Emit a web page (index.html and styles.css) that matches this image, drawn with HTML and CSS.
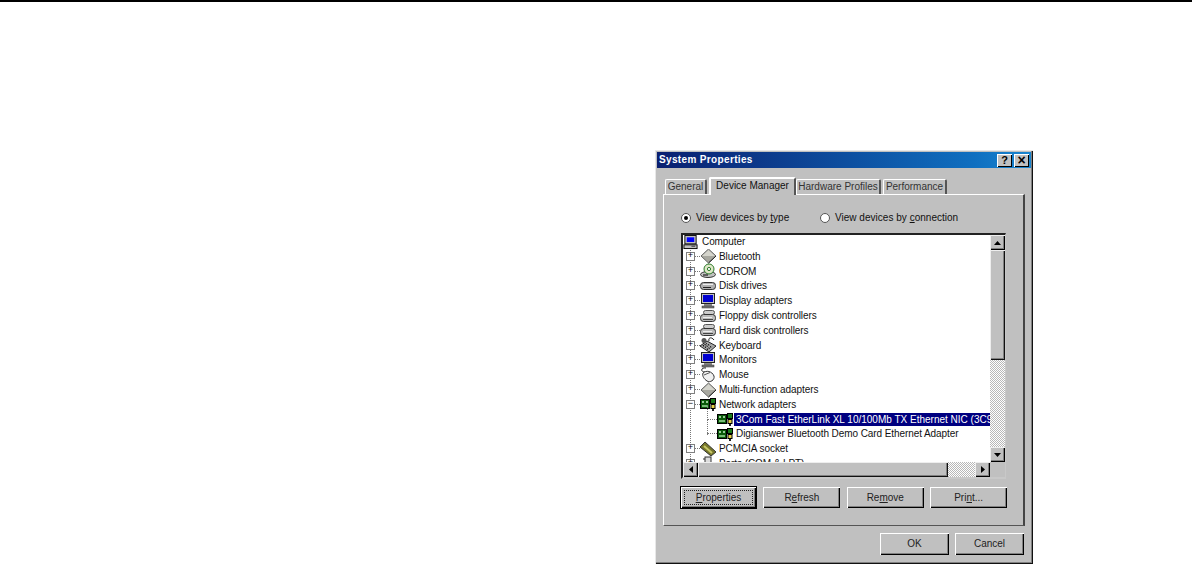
FILE: index.html
```html
<!DOCTYPE html>
<html lang="en">
<head>
<meta charset="utf-8">
<title>System Properties</title>
<link rel="stylesheet" href="styles.css">
</head>
<body>
<svg class="defs" width="0" height="0" aria-hidden="true">
  <symbol id="i-computer" viewBox="0 0 16 16"><rect x="2" y="1" width="12" height="9" fill="#c0c0c0" stroke="#000"/><rect x="4" y="3" width="8" height="5" fill="#00f"/><rect x="1" y="11" width="14" height="4" fill="#c0c0c0" stroke="#000"/><rect x="9" y="12" width="4" height="1" fill="#333"/></symbol>
  <symbol id="i-diamond" viewBox="0 0 16 16"><path d="M8.5 1 16 8 8.5 15 1 8Z" fill="#a8a8a0" stroke="#666"/><path d="M8.5 2 15 8H2Z" fill="#d4d4cc"/><path d="M8.5 15 16 8" stroke="#222" fill="none"/></symbol>
  <symbol id="i-cd" viewBox="0 0 16 16"><ellipse cx="8" cy="11.5" rx="7.5" ry="3" fill="#c0c0c0" stroke="#333"/><circle cx="9" cy="6" r="5" fill="#dfe8c8" stroke="#2c7a2c"/><circle cx="9" cy="6" r="1.6" fill="#fff" stroke="#2c7a2c"/><path d="M3 12h5" stroke="#000"/></symbol>
  <symbol id="i-disk" viewBox="0 0 16 16"><rect x="0.5" y="4.5" width="15" height="7" rx="3" fill="#b0b0b0" stroke="#333"/><path d="M3 6.5h10" stroke="#eee"/><path d="M3 9.5h8" stroke="#222"/></symbol>
  <symbol id="i-monitor" viewBox="0 0 16 16"><rect x="1.5" y="0.5" width="13" height="10" fill="#c0c0c0" stroke="#222"/><rect x="3" y="2" width="10" height="7" fill="#0000d0"/><rect x="4" y="11" width="8" height="2" fill="#888"/><rect x="2" y="13" width="12" height="2" fill="#777" stroke="#333" stroke-width=".5"/></symbol>
  <symbol id="i-floppy" viewBox="0 0 16 16"><rect x="3.5" y="2.5" width="11" height="4" rx="2" fill="#ccc" stroke="#555"/><rect x="0.5" y="6.5" width="15" height="7" rx="3" fill="#bbb" stroke="#333"/><path d="M3 9.5h9" stroke="#eee"/><path d="M3 11.5h10" stroke="#444"/></symbol>
  <symbol id="i-keyboard" viewBox="0 0 16 16"><path d="M0 9 7 4 16 9 9 15Z" fill="#aaa" stroke="#222"/><path d="M3 9 7 6.5M5 10.5 10 7M7 12.500 12 9" stroke="#000" stroke-width="1.5" stroke-dasharray="1 1"/><path d="M9 4C8 0 12 0 14 3" stroke="#222" fill="none"/><circle cx="4" cy="3.500" r="2.500" fill="#555"/></symbol>
  <symbol id="i-mouse" viewBox="0 0 16 16"><path d="M6 1C1 0 0 5 5 5" stroke="#222" fill="none"/><path d="M3 6C6 3 12 4 14 9 15 13 10 16 7 14 4 12 2 9 3 6Z" fill="#f0f0f0" stroke="#333"/><path d="M4 8 10 5.500" stroke="#555"/></symbol>
  <symbol id="i-net" viewBox="0 0 16 16"><rect x="0.500" y="3.500" width="9" height="9" fill="#0a5a0a" stroke="#000"/><rect x="2" y="5" width="2" height="2" fill="#9c9"/><rect x="6" y="5" width="2" height="2" fill="#9c9"/><rect x="2" y="9" width="6" height="2" fill="#7b7"/><rect x="10.500" y="2.500" width="5" height="5" fill="#1a7a1a" stroke="#000"/><rect x="11" y="8.500" width="4" height="4" fill="#e6d24a" stroke="#000"/><rect x="12" y="13" width="2" height="2" fill="#222"/></symbol>
  <symbol id="i-pcmcia" viewBox="0 0 16 16"><path d="M0 6 5 1 16 11 11 15Z" fill="#76762a" stroke="#333"/><path d="M4 5 12 12" stroke="#c8c868" stroke-width="2"/></symbol>
  <symbol id="i-ports" viewBox="0 0 16 16"><rect x="5" y="1" width="6" height="14" fill="#ddd" stroke="#333"/><path d="M3 3h2M3 7h2M3 11h2" stroke="#333"/></symbol>
</svg>
<div class="rule"></div>
<main class="desktop">
  <section class="dialog">
    <header class="titlebar">
      <span class="title">System Properties</span>
      <span class="caps">
        <span class="cap">?</span>
        <span class="cap cap-x">×</span>
      </span>
    </header>
    <nav class="tabs">
      <span class="tab tab-general">General</span>
      <span class="tab tab-active">Device Manager</span>
      <span class="tab tab-hw">Hardware Profiles</span>
      <span class="tab tab-perf">Performance</span>
    </nav>
    <div class="panel">
      <div class="radios">
        <label class="radio radio-type"><span class="dot dot-on"></span><span>View devices by <u>t</u>ype</span></label>
        <label class="radio"><span class="dot"></span><span class="radio-wide">View devices by <u>c</u>onnection</span></label>
      </div>
      <div class="listbox">
        <div class="tree">
          <div class="row row-root"><svg class="ico"><use href="#i-computer"/></svg><span class="lbl">Computer</span></div>
          <div class="row"><span class="exp">+</span><i class="dash"></i><svg class="ico"><use href="#i-diamond"/></svg><span class="lbl">Bluetooth</span></div>
          <div class="row"><span class="exp">+</span><i class="dash"></i><svg class="ico"><use href="#i-cd"/></svg><span class="lbl">CDROM</span></div>
          <div class="row"><span class="exp">+</span><i class="dash"></i><svg class="ico"><use href="#i-disk"/></svg><span class="lbl">Disk drives</span></div>
          <div class="row"><span class="exp">+</span><i class="dash"></i><svg class="ico"><use href="#i-monitor"/></svg><span class="lbl">Display adapters</span></div>
          <div class="row"><span class="exp">+</span><i class="dash"></i><svg class="ico"><use href="#i-floppy"/></svg><span class="lbl">Floppy disk controllers</span></div>
          <div class="row"><span class="exp">+</span><i class="dash"></i><svg class="ico"><use href="#i-floppy"/></svg><span class="lbl">Hard disk controllers</span></div>
          <div class="row"><span class="exp">+</span><i class="dash"></i><svg class="ico"><use href="#i-keyboard"/></svg><span class="lbl">Keyboard</span></div>
          <div class="row"><span class="exp">+</span><i class="dash"></i><svg class="ico"><use href="#i-monitor"/></svg><span class="lbl">Monitors</span></div>
          <div class="row"><span class="exp">+</span><i class="dash"></i><svg class="ico"><use href="#i-mouse"/></svg><span class="lbl">Mouse</span></div>
          <div class="row"><span class="exp">+</span><i class="dash"></i><svg class="ico"><use href="#i-diamond"/></svg><span class="lbl">Multi-function adapters</span></div>
          <div class="row"><span class="exp">−</span><i class="dash"></i><svg class="ico"><use href="#i-net"/></svg><span class="lbl">Network adapters</span></div>
          <div class="row row-child"><i class="dash dash-child"></i><svg class="ico"><use href="#i-net"/></svg><span class="lbl lbl-sel">3Com Fast EtherLink XL 10/100Mb TX Ethernet NIC (3C9</span></div>
          <div class="row row-child row-last"><i class="dash dash-child"></i><svg class="ico"><use href="#i-net"/></svg><span class="lbl">Digianswer Bluetooth Demo Card Ethernet Adapter</span></div>
          <div class="row"><span class="exp">+</span><i class="dash"></i><svg class="ico"><use href="#i-pcmcia"/></svg><span class="lbl">PCMCIA socket</span></div>
          <div class="row"><span class="exp">+</span><i class="dash"></i><svg class="ico"><use href="#i-ports"/></svg><span class="lbl">Ports (COM &amp; LPT)</span></div>
        </div>
        <div class="vscroll">
          <span class="sbtn"><svg class="arrow" viewBox="0 0 7 4"><path d="M3.500 0 7 4H0Z"/></svg></span>
          <span class="vthumb"></span>
          <span class="vtrack"></span>
          <span class="sbtn"><svg class="arrow" viewBox="0 0 7 4"><path d="M0 0H7L3.500 4Z"/></svg></span>
        </div>
        <div class="hscroll">
          <span class="sbtn"><svg class="arrow-h" viewBox="0 0 4 7"><path d="M4 0V7L0 3.500Z"/></svg></span>
          <span class="hthumb"></span>
          <span class="htrack"></span>
          <span class="sbtn"><svg class="arrow-h" viewBox="0 0 4 7"><path d="M0 0 4 3.500 0 7Z"/></svg></span>
        </div>
        <div class="corner"></div>
      </div>
      <div class="actions">
        <button class="btn btn-default"><span class="focus"><u>P</u>roperties</span></button>
        <button class="btn">R<u>e</u>fresh</button>
        <button class="btn">Re<u>m</u>ove</button>
        <button class="btn">Pri<u>n</u>t...</button>
      </div>
    </div>
    <footer class="footer">
      <button class="btn btn-foot">OK</button>
      <button class="btn btn-foot">Cancel</button>
    </footer>
  </section>
</main>
</body>
</html>
```
FILE: styles.css
```css
* { box-sizing: border-box; }
html, body { margin: 0; height: 564px; overflow: hidden; background: #fff; }
body { font: 10px/14px "Liberation Sans", Arial, sans-serif; color: #111; }
.defs { position: absolute; }
.rule { height: 2px; background: #000; }
.desktop { padding: 148px 0 0 655px; }

.dialog {
  width: 378px; height: 414px; padding: 2px; background: #c0c0c0;
  box-shadow: inset 1px 1px 0 #e8e8e8, inset -1px -1px 0 #111, inset -2px -2px 0 #808080;
}
.titlebar {
  height: 16px; display: flex; align-items: center; justify-content: space-between;
  padding: 0 2px; color: #fff; background: linear-gradient(90deg, #0a1f70, #0f6fc0 85%, #1a86d0);
}
.title { font-weight: 700; letter-spacing: .35px; }
.caps { display: flex; }
.cap {
  width: 15px; height: 13px; background: #c0c0c0; color: #000;
  font: 700 11px/13px "Liberation Sans", sans-serif; text-align: center;
  box-shadow: inset 1px 1px 0 #fff, inset -1px -1px 0 #000;
}
.cap-x { margin-left: 2px; font-size: 14px; }

.tabs { height: 26px; display: flex; align-items: flex-end; padding-left: 8px; }
.tab {
  height: 15px; line-height: 14px; text-align: center; background: #c0c0c0; white-space: nowrap;
  border-top: 1px solid #fff; border-left: 1px solid #fff; border-right: 2px solid #555;
  border-radius: 2px 2px 0 0; color: #333;
}
.tab-general { width: 42px; }
.tab-active { width: 87px; height: 18px; margin-left: 2px; margin-bottom: -1px; position: relative; border-top-width: 2px; border-left-width: 2px; color: #111; }
.tab-hw { width: 85px; }
.tab-perf { width: 64px; margin-left: 2px; }

.panel {
  width: 362px; height: 332px; margin-left: 6px; padding: 16px 0 0 17px; background: #c0c0c0;
  border-top: 1px solid #fff; border-left: 1px solid #fff; border-right: 2px solid #444; border-bottom: 1px solid #555;
}
.radios { display: flex; height: 14px; }
.radio { display: flex; align-items: center; gap: 5px; }
.radio-type { width: 139px; }
.radio-wide { letter-spacing: .02px; }
.dot {
  width: 10px; height: 10px; border-radius: 50%; background: #fff;
  border: 1px solid #555; display: flex; align-items: center; justify-content: center;
}
.dot-on::after { content: ""; width: 4px; height: 4px; border-radius: 50%; background: #000; }

.listbox {
  width: 325px; height: 246px; margin-top: 8px; background: #fff;
  border: 2px solid #222; border-right: 1px solid #c8c8c8; border-bottom-color: #c8c8c8;
  display: grid; grid-template-columns: 1fr 15px; grid-template-rows: 1fr 15px;
}
.tree { position: relative; overflow: hidden; background: #fff; }
.tree::before { content: ""; position: absolute; left: 7px; top: 12px; height: 230px; border-left: 1px dotted #777; }
.row { height: 14.8px; display: flex; align-items: center; white-space: nowrap; padding-left: 3px; position: relative; }
.row-root { margin-top: -1px; padding-left: 0; z-index: 1; background: #fff; height: 15px; }
.exp {
  width: 9px; height: 9px; flex: none; border: 1px solid #808080; background: #fff;
  font: 9px/7px "Liberation Mono", monospace; text-align: center; color: #000; position: relative; z-index: 1;
}
.dash { width: 5px; flex: none; border-top: 1px dotted #777; }
.ico { width: 16px; height: 16px; flex: none; overflow: visible; }
.lbl { margin-left: 1px; padding: 0 2px; line-height: 13px; letter-spacing: -.08px; }
.row-root .ico { width: 15px; }
.row-root .lbl { margin-left: 2px; }
.row-child { padding-left: 24px; }
.row-child::before { content: ""; position: absolute; left: 24px; top: -7px; height: 15px; border-left: 1px dotted #777; }
.dash-child { width: 10px; }
.lbl-sel { background: #000080; color: #fff; letter-spacing: 0; flex: 1; }

.vscroll { display: flex; flex-direction: column; background: #c0c0c0; }
.hscroll { display: flex; background: #c0c0c0; }
.corner { background: #c0c0c0; }
.sbtn {
  width: 15px; height: 15px; flex: none; background: #c0c0c0; display: flex; align-items: center; justify-content: center;
  box-shadow: inset 1px 1px 0 #eee, inset -1px -1px 0 #000, inset -2px -2px 0 #808080;
}
.arrow { width: 7px; height: 4px; }
.arrow-h { width: 4px; height: 7px; }
.vthumb, .hthumb { background: #c0c0c0; box-shadow: inset 1px 1px 0 #eee, inset -1px -1px 0 #111, inset -2px -2px 0 #808080; }
.vthumb { height: 110px; flex: none; }
.hthumb { width: 250px; flex: none; }
.vtrack, .htrack {
  flex: 1; background: repeating-conic-gradient(#fff 0 25%, #b8b8b8 0 50%) 0 0 / 2px 2px;
}

.actions { display: flex; gap: 6.4px; margin: 8px 0 0; }
.btn {
  width: 77px; height: 21px; padding: 0; border: 0; background: #c0c0c0; color: #222;
  font: 10px/14px "Liberation Sans", sans-serif;
  box-shadow: inset 1px 1px 0 #fff, inset -1px -1px 0 #000, inset -2px -2px 0 #808080;
}
.btn-default { width: 75px; margin-right: 1px; box-shadow: 0 0 0 1px #000, inset 1px 1px 0 #fff, inset -1px -1px 0 #000, inset -2px -2px 0 #808080; }
.focus { display: block; margin: 3px; border: 1px dotted #222; line-height: 13px; }
.footer { display: flex; justify-content: flex-end; gap: 6px; padding: 7px 7px 0 0; }
.btn-foot { width: 69px; height: 22px; }
```
